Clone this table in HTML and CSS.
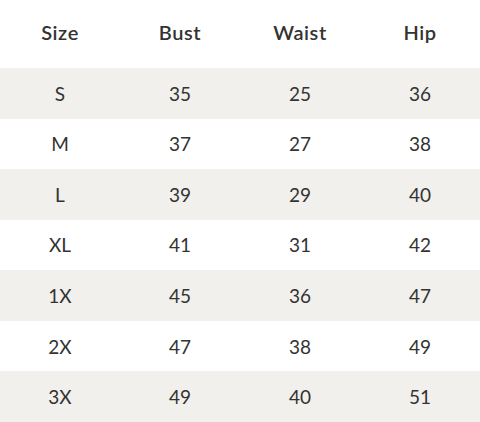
FILE: index.html
```html
<!DOCTYPE html>
<html>
<head>
<meta charset="utf-8">
<link rel="stylesheet" href="styles.css">
</head>
<body>
<table class="chart">
  <thead>
    <tr class="head"><th>Size</th><th>Bust</th><th>Waist</th><th>Hip</th></tr>
  </thead>
  <tbody>
    <tr class="alt"><td>S</td><td>35</td><td>25</td><td>36</td></tr>
    <tr><td>M</td><td>37</td><td>27</td><td>38</td></tr>
    <tr class="alt"><td>L</td><td>39</td><td>29</td><td>40</td></tr>
    <tr><td>XL</td><td>41</td><td>31</td><td>42</td></tr>
    <tr class="alt"><td>1X</td><td>45</td><td>36</td><td>47</td></tr>
    <tr><td>2X</td><td>47</td><td>38</td><td>49</td></tr>
    <tr class="alt"><td>3X</td><td>49</td><td>40</td><td>51</td></tr>
  </tbody>
</table>
</body>
</html>
```
FILE: styles.css
```css
html, body {
  margin: 0;
  padding: 0;
  background: #ffffff;
}
.chart {
  width: 480px;
  border-collapse: collapse;
  table-layout: fixed;
  font-family: "Lato", "Liberation Sans", sans-serif;
  color: #333333;
}
.chart th, .chart td {
  width: 120px;
  padding: 0;
  text-align: center;
}
.head th {
  height: 64px;
  padding-bottom: 4px;
  font-size: 20px;
  font-weight: 600;
  letter-spacing: 0.6px;
  color: #333333;
}
.chart td {
  height: 50.57px;
  font-size: 19px;
  font-weight: 400;
}
.alt {
  background: #f1f0ec;
}
```
